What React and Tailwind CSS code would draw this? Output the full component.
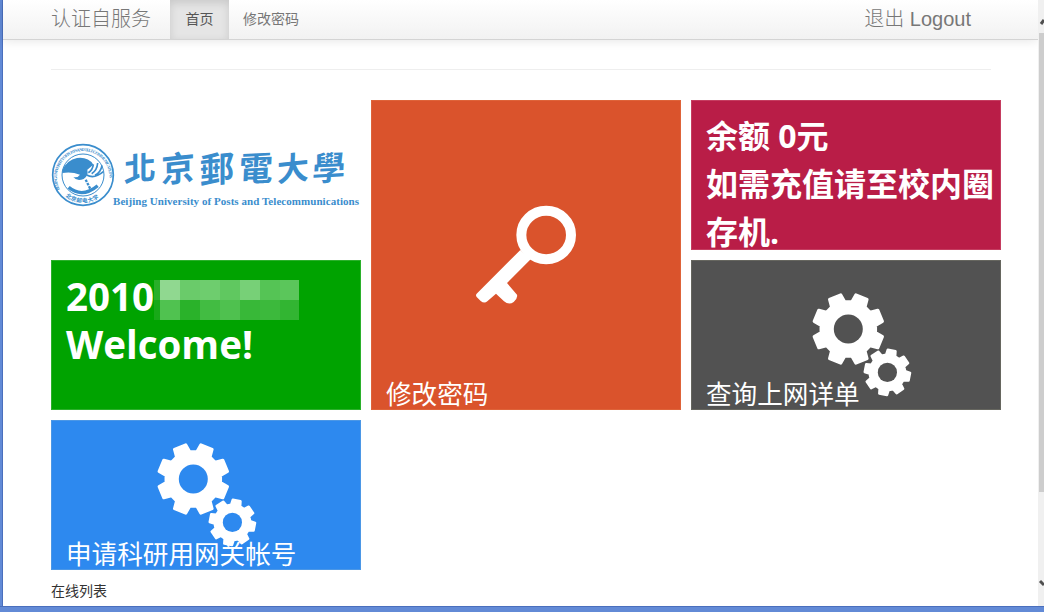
import React from "react";

const gearPoints = (cx, cy, outer, root, offset) => {
  const pts = [];
  const add = (r, deg) => {
    const a = (deg * Math.PI) / 180;
    pts.push(`${(cx + r * Math.sin(a)).toFixed(2)},${(cy - r * Math.cos(a)).toFixed(2)}`);
  };
  for (let i = 0; i < 8; i++) {
    const c = offset + i * 45;
    add(root, c - 15);
    add(outer, c - 10);
    add(outer, c + 10);
    add(root, c + 15);
  }
  return pts.join(" ");
};

function Gears({ className, hole }) {
  return (
    <svg className={className} width="104" height="106" viewBox="0 0 104 106">
      <g fill="#fff" stroke="#fff" strokeLinejoin="round">
        <polygon points={gearPoints(38.3, 37, 35, 27.5, 22.5)} strokeWidth="3" />
        <polygon points={gearPoints(77.4, 80.4, 22.7, 17.8, 11)} strokeWidth="2.4" />
      </g>
      <circle cx="38.3" cy="37" r="14.5" fill={hole} />
      <circle cx="77.4" cy="80.4" r="9.6" fill={hole} />
    </svg>
  );
}

function KeyIcon({ className }) {
  return (
    <svg className={className} width="130" height="130" viewBox="0 0 390 390">
      <path
        fill="#fff"
        d="M181 180L50 311Q46 316 50 321L62 333Q73 342 82 334L108 311L132 334Q147 346 161 336Q174 324 171 314L141 279L212 208Z"
      />
      <ellipse cx="258.5" cy="135" rx="74.5" ry="72.5" fill="none" stroke="#fff" strokeWidth="30" />
    </svg>
  );
}

function Seal() {
  return (
    <svg className="mt-[42px] shrink-0" width="64" height="66" viewBox="0 0 192 198">
      <defs>
        <path id="ring" d="M26 142A79 79 0 1 1 167 142" />
        <path id="base" d="M43 163A84 84 0 0 0 150 163" />
      </defs>
      <g fill="none" stroke="#3a8dcd">
        <circle cx="96" cy="99" r="91" strokeWidth="5" />
        <circle cx="96" cy="99" r="63" strokeWidth="3" />
        <path d="M53 136Q93 170 140 131" strokeWidth="10" />
        <path d="M104 113L119 143" strokeWidth="7" strokeDasharray="8 3" />
        <path d="M112 92Q125 84 127 67M122 95Q138 86 140 63M132 100Q150 90 153 70M107 99Q130 112 157 89" strokeWidth="5" />
      </g>
      <path d="M34 84Q48 54 78 48Q112 44 127 68L109 83Q113 101 98 111Q77 119 67 105Q79 109 87 98Q61 88 34 93Z" fill="#3a8dcd" />
      <g fill="#3a8dcd" fontWeight="700">
        <text fontSize="13" fontFamily="Liberation Serif, serif">
          <textPath href="#ring" textLength="286">BEIJING UNIVERSITY OF POSTS AND TELECOMMUNICATIONS</textPath>
        </text>
        <text fontSize="17" fontFamily="Noto Sans CJK SC, sans-serif">
          <textPath href="#base" textLength="108">北京邮电大学</textPath>
        </text>
      </g>
    </svg>
  );
}

const mosaic = [
  ["bg-[#29af29]", "bg-[#90d890]", "bg-[#6acb6a]", "bg-[#6ecd6e]", "bg-[#60c860]", "bg-[#77d077]", "bg-[#55c455]", "bg-[#5bc65b]"],
  ["bg-[#18a918]", "bg-[#50c250]", "bg-[#2ab22a]", "bg-[#42bc42]", "bg-[#4fc14f]", "bg-[#38b838]", "bg-[#3cb93c]", "bg-[#32b532]"],
];

const label = "pl-[15px] text-[25.6px] leading-[30px] text-white whitespace-nowrap relative";

export default function App() {
  return (
    <div className="flex h-[612px] w-[1044px] flex-col overflow-hidden bg-white font-['Liberation_Sans','Noto_Sans_CJK_SC',sans-serif]">
      <div className="flex h-[606px]">
        <div className="w-[3px] shrink-0 border-r border-[#4a6fbd] bg-[#628ad6]" />
        <div className="flex w-[1035px] shrink-0 flex-col">
          <header className="flex h-10 shrink-0 border-b border-[#d4d4d4] bg-linear-to-b from-white to-[#f2f2f2] pl-12 shadow-[0_1px_10px_rgba(0,0,0,0.1)]">
            <div className="w-[119px] text-[20px] leading-[38px] font-light whitespace-nowrap text-[#777]">认证自服务</div>
            <div className="w-[59px] bg-[#e5e5e5] text-center text-[14px] leading-[39px] text-[#555] shadow-[inset_0_3px_8px_rgba(0,0,0,0.125)]">首页</div>
            <div className="pl-[14px] text-[14px] leading-[39px] text-[#777]">修改密码</div>
            <div className="mr-[67px] ml-auto text-[20px] leading-[38px] font-light whitespace-nowrap text-[#777]">退出 Logout</div>
          </header>
          <main className="pl-12">
            <div className="mt-[29px] h-px w-[940px] bg-[#eee]" />
            <div className="mt-[30px] grid grid-cols-[310px_310px_310px] grid-rows-[150px_150px_150px] gap-[10px]">
              <div className="flex overflow-hidden">
                <Seal />
                <div className="flex w-[246px] shrink-0 flex-col pt-[38px]">
                  <div className="flex h-[57px] items-center pl-[6px] text-[36px] leading-[57px] font-bold text-[#3a8dcd] font-['Noto_Sans_CJK_TC',sans-serif]">
                    <span className="w-[38px] -skew-x-6 -rotate-6 text-center text-[32px]">北</span>
                    <span className="w-[38px] -skew-x-6 -rotate-6 text-center text-[34px]">京</span>
                    <span className="w-[40px] -skew-x-6 -rotate-6 text-center text-[35px]">郵</span>
                    <span className="w-[38px] -skew-x-6 -rotate-3 text-center text-[34px]">電</span>
                    <span className="w-[36px] -skew-x-6 -rotate-6 text-center text-[32px]">大</span>
                    <span className="w-[36px] -skew-x-6 -rotate-3 text-center text-[33px]">學</span>
                  </div>
                  <svg className="-mt-[2px] -ml-[2px] overflow-visible" width="248" height="16">
                    <text x="0" y="12" textLength="246" fontSize="11" fontWeight="700" fill="#3a8dcd" fontFamily="Liberation Serif, serif">Beijing University of Posts and Telecommunications</text>
                  </svg>
                </div>
              </div>
              <div className="relative row-span-2 flex flex-col justify-end bg-[#da532c] shadow-[inset_0_0_0_1px_#de6339]">
                <KeyIcon className="absolute top-[90px] left-[89px]" />
                <div className={label}>修改密码</div>
              </div>
              <div className="overflow-hidden bg-[#b91d47] pt-[12px] pl-[15px] text-[32px] leading-[48px] font-bold whitespace-nowrap text-white shadow-[inset_0_0_0_1px_#c53d60] font-['Open_Sans','Noto_Sans_CJK_SC',sans-serif]">
                <div>余额 0元</div>
                <div>如需充值请至校内圈</div>
                <div>存机.</div>
              </div>
              <div className="bg-[#00a300] pt-[12px] pl-[15px] text-[38.5px] leading-[48px] font-bold text-white shadow-[inset_0_0_0_1px_#2bb02b] font-['Open_Sans',sans-serif]">
                <div className="flex h-12">
                  <span className="w-[88px] shrink-0 overflow-hidden">2010</span>
                  <div className="mt-2 flex h-10 w-[145px] shrink-0 flex-col">
                    {mosaic.map((row, r) => (
                      <div key={r} className="flex h-5">
                        {row.map((color, i) => (
                          <div key={i} className={`${i === 0 ? "w-[6px]" : i === 7 ? "w-[19px]" : "w-5"} ${color}`} />
                        ))}
                      </div>
                    ))}
                  </div>
                </div>
                <div>Welcome!</div>
              </div>
              <div className="relative flex flex-col justify-end bg-[#525252] shadow-[inset_0_0_0_1px_#66665f]">
                <Gears className="absolute top-8 left-[119px]" hole="#525252" />
                <div className={label}>查询上网详单</div>
              </div>
              <div className="relative flex flex-col justify-end bg-[#2d89ef] shadow-[inset_0_0_0_1px_#4b97e6]">
                <Gears className="absolute top-[22px] left-[104px]" hole="#2d89ef" />
                <div className={label}>申请科研用网关帐号</div>
              </div>
            </div>
            <div className="mt-[11px] text-[14px] leading-5 text-[#333]">在线列表</div>
          </main>
        </div>
        <div className="flex w-[6px] shrink-0 flex-col overflow-hidden bg-[#f0f0f0]">
          <svg width="6" height="33" viewBox="0 0 6 33">
            <path d="M3 24L6 20" stroke="#505050" strokeWidth="3" />
          </svg>
          <div className="ml-px h-[459px] bg-[#cdcdcd]" />
          <svg className="mt-auto" width="6" height="40" viewBox="0 0 6 40">
            <path d="M2 15L6 19" stroke="#505050" strokeWidth="3" />
          </svg>
        </div>
      </div>
      <div className="h-[6px] border-t border-[#4a6fbd] bg-[#628ad6]" />
    </div>
  );
}
